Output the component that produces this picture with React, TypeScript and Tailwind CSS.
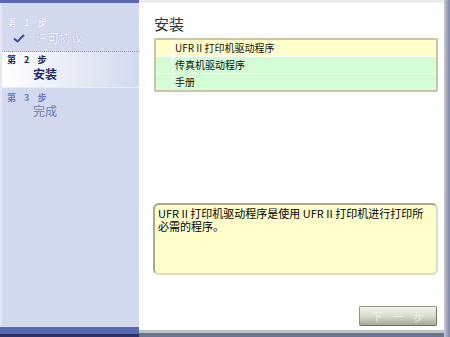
import React from "react"

const cjk = "font-['Noto_Sans_CJK_SC','Noto_Sans',sans-serif]"

const Sidebar: React.FC = () => {
    return (
        <div className="flex flex-col w-[139px] h-full bg-[#d4daee]">
            <div className="h-[3px] bg-[#5a69b4]"></div>
            <div className="flex-1 flex flex-col border-l-2 border-[#e3e7f5]">
                {/* step 1 - done */}
                <div className="h-[49px] pt-[15px] pl-[5px] border-b border-dotted border-[#8e97c9]">
                    <div className="text-[9px] leading-[10px] font-bold tracking-[3px] text-[#f2f4fb] [text-shadow:0_0_1px_#98a0cc]">第 1 步</div>
                    <div className="flex items-center mt-[3px]">
                        <svg width="12" height="9" viewBox="0 0 12 9" className="ml-[6px]">
                            <path d="M1 4.5 L4.5 7.5 L11 1" fill="none" stroke="#3f4c9c" strokeWidth="2" />
                        </svg>
                        <span className="ml-[10px] text-[12px] leading-[14px] text-[#f4f5fb] [text-shadow:0_0_1px_#8a93c4]">许可协议</span>
                    </div>
                </div>
                {/* step 2 - current */}
                <div className="h-[36px] pt-[3px] pl-[5px] bg-gradient-to-r from-white to-[#d4daee] border-b border-[#e9ecf7]">
                    <div className="text-[9px] leading-[10px] font-bold tracking-[3px] text-[#1c1f4c]">第 2 步</div>
                    <div className="ml-[26px] mt-[2px] text-[12px] leading-[14px] font-bold text-[#1e2a6c]">安装</div>
                </div>
                {/* step 3 */}
                <div className="pt-[5px] pl-[5px]">
                    <div className="text-[9px] leading-[10px] font-bold tracking-[3px] text-[#6a79b8]">第 3 步</div>
                    <div className="ml-[26px] mt-[1px] text-[12px] leading-[14px] text-[#6a79b8]">完成</div>
                </div>
                <div className="flex-1"></div>
            </div>
            <div className="h-[7px] bg-[#5a69b4]"></div>
            <div className="h-[3px] bg-[#2b3266]"></div>
        </div>
    )
}

const rows = [
    { name: "UFR II 打印机驱动程序", color: "bg-[#ffffcc]" },
    { name: "传真机驱动程序", color: "bg-[#d5fdd5]" },
    { name: "手册", color: "bg-[#d5fdd5]" },
]

const App: React.FC = () => {
    return (
        <div className={`flex w-[450px] h-[337px] overflow-hidden bg-white ${cjk}`}>
            <Sidebar />
            <div className="flex flex-col w-[305px] h-full">
                <div className="h-[3px] bg-[#ececec]"></div>
                <div className="flex-1 flex flex-col pl-[15px] pr-[6px]">
                    <h1 className="mt-[11px] text-[15px] leading-[20px] text-[#333333]">安装</h1>
                    <div className="mt-[4px] flex flex-col gap-px bg-white border-2 border-[#cac6a6]">
                        {rows.map((r) => (
                            <div key={r.name} className="flex gap-px h-[16px]">
                                <div className={`w-[16px] ${r.color}`}></div>
                                <div className={`flex-1 pl-[2px] text-[10px] leading-[16px] text-[#111] ${r.color}`}>{r.name}</div>
                            </div>
                        ))}
                    </div>
                    <div className="mt-[111px] -ml-px h-[72px] rounded-[6px] bg-[#ffffcc] border-2 border-t-[#a9a892] border-l-[#a9a892] border-r-[#dcdcc6] border-b-[#dcdcc6] px-[3px] pt-[2px] text-[11px] leading-[13px] text-black">
                        UFR II 打印机驱动程序是使用 UFR II 打印机进行打印所<br />必需的程序。
                    </div>
                    <div className="flex-1"></div>
                    <div className="self-end mr-px mb-[4px] w-[78px] h-[20px] flex items-center justify-center rounded-[2px] border border-[#8f9585] border-r-[#6c7163] border-b-[#6c7163] bg-gradient-to-b from-[#f4f5ef] via-[#d8dccd] to-[#a4ab95] text-[11px] tracking-[10px] pl-[10px] text-[#e9ece2]">
                        下一步
                    </div>
                </div>
                <div className="h-[3px] bg-[#c2c2c2]"></div>
                <div className="h-[4px] bg-[#6b7392]"></div>
            </div>
            <div className="w-[6px] h-full bg-gradient-to-r from-[#c9cad3] to-[#7c83a3]"></div>
        </div>
    )
}

export default App
